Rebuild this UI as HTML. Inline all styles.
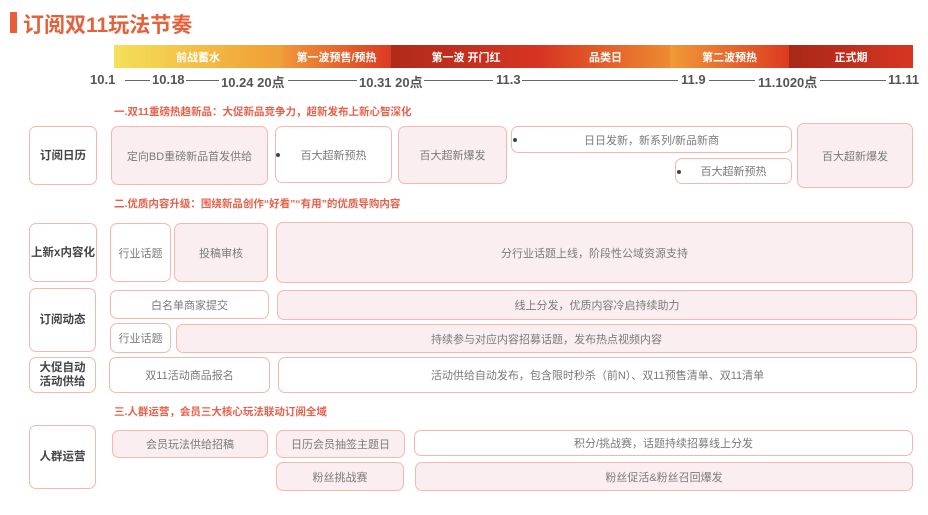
<!DOCTYPE html><html><head><meta charset="utf-8"><style>
body{margin:0;width:928px;height:515px;background:#fff;position:relative;overflow:hidden;font-family:"Liberation Sans","Noto Sans CJK SC",sans-serif}
.a{position:absolute;box-sizing:border-box}
.b{position:absolute;box-sizing:border-box;border:1.3px solid #f6b8ac;border-radius:7px;display:flex;align-items:center;justify-content:center;font-size:11px;color:#7a7a7a;background:#fff}
.p{background:#fbeef0}
.l{color:#444;font-weight:bold;font-size:11.5px;line-height:14px;text-align:center}
.h{position:absolute;color:#e8604a;font-weight:bold;font-size:10.5px}
.seg{position:absolute;top:45px;height:23px;color:#fff;font-weight:bold;font-size:11px;display:flex;align-items:center;justify-content:center}
.d{position:absolute;top:72px;font-size:13px;font-weight:bold;color:#555}
.ln{position:absolute;top:80px;height:1px;background:#666}
.dot{position:absolute;width:4px;height:4px;border-radius:2px;background:#444}
</style></head><body>
<div class="a" style="left:10px;top:12px;width:7px;height:21px;background:#e8603a"></div>
<div class="a" style="left:23px;top:9px;font-size:21px;font-weight:bold;color:#e8603a">订阅双11玩法节奏</div>
<div class="seg" style="left:114px;width:168px;background:linear-gradient(90deg,#f5e05a,#f2a93a 80%,#f0a03a)">前战蓄水</div>
<div class="seg" style="left:282px;width:109px;background:linear-gradient(90deg,#f0983a,#dc3a22)">第一波预售/预热</div>
<div class="seg" style="left:391px;width:150px;background:linear-gradient(90deg,#b02a1a,#d83522)">第一波 开门红</div>
<div class="seg" style="left:541px;width:129px;background:linear-gradient(90deg,#d83522,#ee8a32)">品类日</div>
<div class="seg" style="left:670px;width:119px;background:linear-gradient(90deg,#f09a38,#dc3a22)">第二波预热</div>
<div class="seg" style="left:789px;width:124px;background:linear-gradient(90deg,#a82818,#d83522)">正式期</div>
<div class="d" style="left:90px">10.1</div><div class="ln" style="left:125px;width:25px"></div>
<div class="d" style="left:152px">10.18</div><div class="ln" style="left:186px;width:33px"></div>
<div class="d" style="left:221px">10.24 20点</div><div class="ln" style="left:288px;width:69px"></div>
<div class="d" style="left:359px">10.31 20点</div><div class="ln" style="left:424px;width:69px"></div>
<div class="d" style="left:496px">11.3</div><div class="ln" style="left:522px;width:156px"></div>
<div class="d" style="left:681px">11.9</div><div class="ln" style="left:709px;width:46px"></div>
<div class="d" style="left:758px">11.1020点</div><div class="ln" style="left:820px;width:66px"></div>
<div class="d" style="left:888px">11.11</div>
<div class="h" style="left:114px;top:104px">一.双11重磅热趋新品：大促新品竞争力，超新发布上新心智深化</div>
<div class="b l" style="left:29px;top:126px;width:68px;height:59px">订阅日历</div>
<div class="b p" style="left:111px;top:126px;width:157px;height:59px">定向BD重磅新品首发供给</div>
<div class="b" style="left:275px;top:126px;width:117px;height:57px">百大超新预热</div><div class="dot" style="left:276px;top:153px"></div>
<div class="b p" style="left:398px;top:126px;width:109px;height:58px">百大超新爆发</div>
<div class="b" style="left:511px;top:126px;width:281px;height:27px">日日发新，新系列/新品新商</div><div class="dot" style="left:513px;top:138px"></div>
<div class="b" style="left:675px;top:158px;width:117px;height:26px">百大超新预热</div><div class="dot" style="left:677px;top:170px"></div>
<div class="b p" style="left:797px;top:123px;width:116px;height:65px">百大超新爆发</div>
<div class="h" style="left:114px;top:196px">二.优质内容升级：围绕新品创作“好看”“有用”的优质导购内容</div>
<div class="b l" style="left:29px;top:223px;width:68px;height:59px">上新x内容化</div>
<div class="b" style="left:110px;top:223px;width:61px;height:59px">行业话题</div>
<div class="b p" style="left:174px;top:223px;width:94px;height:59px">投稿审核</div>
<div class="b p" style="left:276px;top:222px;width:637px;height:61px">分行业话题上线，阶段性公域资源支持</div>
<div class="b l" style="left:29px;top:288px;width:67px;height:64px">订阅动态</div>
<div class="b" style="left:110px;top:290px;width:159px;height:29px">白名单商家提交</div>
<div class="b p" style="left:277px;top:290px;width:640px;height:30px">线上分发，优质内容冷启持续助力</div>
<div class="b" style="left:110px;top:323px;width:61px;height:30px">行业话题</div>
<div class="b p" style="left:176px;top:324px;width:741px;height:29px">持续参与对应内容招募话题，发布热点视频内容</div>
<div class="b l" style="left:29px;top:357px;width:67px;height:36px">大促自动<br>活动供给</div>
<div class="b" style="left:109px;top:357px;width:161px;height:36px">双11活动商品报名</div>
<div class="b" style="left:278px;top:357px;width:639px;height:36px">活动供给自动发布，包含限时秒杀（前N）、双11预售清单、双11清单</div>
<div class="h" style="left:114px;top:404px">三.人群运营，会员三大核心玩法联动订阅全域</div>
<div class="b l" style="left:29px;top:425px;width:67px;height:64px">人群运营</div>
<div class="b p" style="left:112px;top:430px;width:156px;height:28px">会员玩法供给招稿</div>
<div class="b p" style="left:276px;top:430px;width:129px;height:28px">日历会员抽签主题日</div>
<div class="b" style="left:414px;top:430px;width:499px;height:26px">积分/挑战赛，话题持续招募线上分发</div>
<div class="b p" style="left:276px;top:462px;width:128px;height:29px">粉丝挑战赛</div>
<div class="b p" style="left:415px;top:462px;width:498px;height:29px">粉丝促活&amp;粉丝召回爆发</div>
</body></html>
